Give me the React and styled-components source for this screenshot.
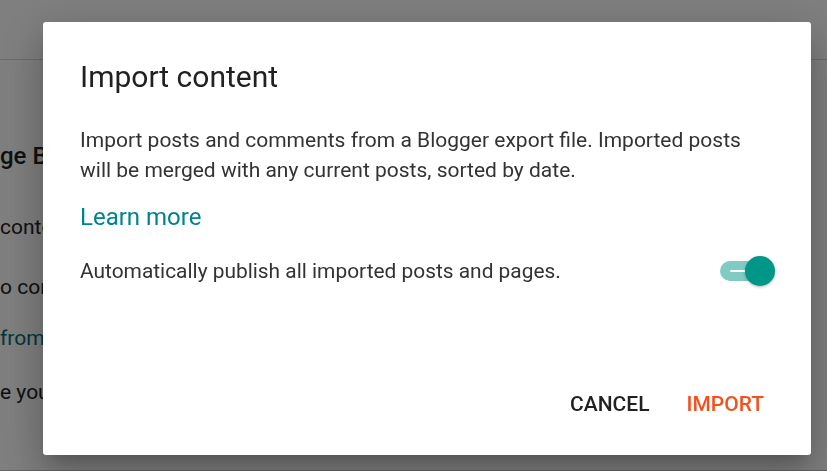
import React from "react";
import styled, { createGlobalStyle } from "styled-components";

const GlobalStyle = createGlobalStyle`
  html, body {
    margin: 0;
    padding: 0;
    width: 827px;
    height: 471px;
    overflow: hidden;
  }
  body {
    font-family: Roboto, "Noto Sans", Arial, sans-serif;
    background: #ffffff;
  }
`;

const Page = styled.div`
  height: 471px;
  display: flex;
  flex-direction: column;
  background: #ffffff;
`;

const PageHeader = styled.div`
  height: 59px;
  border-bottom: 1px solid #d6d6d6;
  flex-shrink: 0;
`;

const PageBody = styled.div`
  flex: 1;
  display: flex;
  flex-direction: column;
  padding-top: 80px;
  border-bottom: 1px solid #c8c8c8;
`;

const PageTitle = styled.h2`
  margin: 0 0 40px;
  font-size: 24px;
  font-weight: 500;
  color: #212121;
  line-height: 32px;
`;

const PageLine = styled.p`
  margin: 0 0 ${(p) => p.space ?? 30}px;
  font-size: 21px;
  line-height: 30px;
  color: ${(p) => (p.link ? "#006d75" : "#212121")};
  white-space: nowrap;
`;

const Overlay = styled.div`
  position: fixed;
  inset: 0;
  background: rgba(0, 0, 0, 0.5);
  display: flex;
  align-items: flex-start;
  padding: 22px 0 0 43px;
`;

const Dialog = styled.div`
  box-sizing: border-box;
  width: 768px;
  height: 433px;
  background: #ffffff;
  border-radius: 3px;
  box-shadow: 0 11px 15px -7px rgba(0, 0, 0, 0.2),
    0 24px 38px 3px rgba(0, 0, 0, 0.14), 0 9px 46px 8px rgba(0, 0, 0, 0.12);
  padding: 37px 36px 0 37px;
  display: flex;
  flex-direction: column;
`;

const Title = styled.h1`
  margin: 0;
  font-size: 30px;
  line-height: 36px;
  font-weight: 400;
  color: #212121;
`;

const Text = styled.p`
  margin: 30px 0 0;
  max-width: 680px;
  font-size: 21px;
  line-height: 30px;
  color: #333333;
`;

const LearnMore = styled.a`
  display: block;
  margin-top: 14px;
  font-size: 24px;
  line-height: 36px;
  color: #00838f;
  text-decoration: none;
`;

const ToggleRow = styled.div`
  display: flex;
  align-items: center;
  justify-content: space-between;
  margin-top: 20px;
  height: 32px;
`;

const ToggleLabel = styled.span`
  font-size: 20.9px;
  color: #333333;
`;

const Switch = styled.div`
  position: relative;
  width: 52px;
  height: 20px;
  margin-right: 3px;
  border-radius: 10px;
  background: #80cbc4;
`;

const SwitchMark = styled.span`
  position: absolute;
  left: 10px;
  top: 9px;
  width: 18px;
  height: 2px;
  background: #ffffff;
  border-radius: 1px;
`;

const Thumb = styled.span`
  position: absolute;
  right: -3px;
  top: -5px;
  width: 30px;
  height: 30px;
  border-radius: 50%;
  background: #009688;
  box-shadow: 0 1px 3px rgba(0, 0, 0, 0.3);
`;

const Actions = styled.div`
  margin-top: auto;
  margin-bottom: 33px;
  display: flex;
  justify-content: flex-end;
  gap: 15px;
`;

const ActionButton = styled.button`
  border: none;
  background: transparent;
  font-family: Roboto, Arial, sans-serif;
  font-size: 21px;
  font-weight: 500;
  line-height: 36px;
  padding: 0 11px;
  letter-spacing: 0;
  color: ${(p) => (p.primary ? "#f4511e" : "#212121")};
  cursor: pointer;
`;

export default function App() {
  return (
    <>
      <GlobalStyle />
      <Page>
        <PageHeader />
        <PageBody>
          <PageTitle>ge Bl</PageTitle>
          <PageLine>content</PageLine>
          <PageLine space={21}>o content</PageLine>
          <PageLine link space={24}>
            from
          </PageLine>
          <PageLine>e your</PageLine>
        </PageBody>
      </Page>
      <Overlay>
        <Dialog>
          <Title>Import content</Title>
          <Text>
            Import posts and comments from a Blogger export file. Imported
            posts will be merged with any current posts, sorted by date.
          </Text>
          <LearnMore href="#">Learn more</LearnMore>
          <ToggleRow>
            <ToggleLabel>
              Automatically publish all imported posts and pages.
            </ToggleLabel>
            <Switch>
              <SwitchMark />
              <Thumb />
            </Switch>
          </ToggleRow>
          <Actions>
            <ActionButton>CANCEL</ActionButton>
            <ActionButton primary>IMPORT</ActionButton>
          </Actions>
        </Dialog>
      </Overlay>
    </>
  );
}
